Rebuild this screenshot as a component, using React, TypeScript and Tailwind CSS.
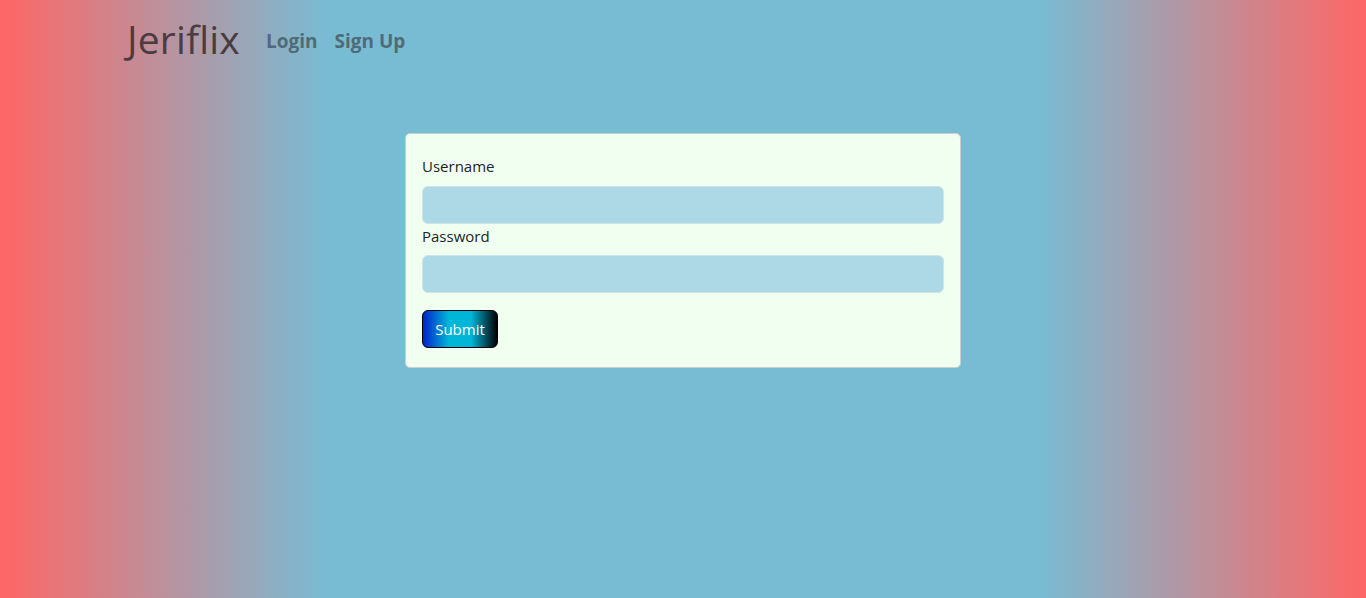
export default function App() {
  return (
    <div className="min-h-screen w-full bg-[linear-gradient(to_right,#ff6666_0%,#78bcd3_24%,#78bcd3_76%,#ff6666_100%)] font-['Open_Sans','Noto_Sans',sans-serif]">
      <nav className="h-[80px]">
        <div className="mx-auto flex w-[1140px] items-center px-3 pt-[12px]">
          <a href="#" className="ml-[2px] mr-[26px] text-[39px] font-medium leading-[54px] tracking-[0.2px] text-[#4a3c40]">
            Jeriflix
          </a>
          <div className="flex gap-[17px] pt-[4px] text-[19px] font-bold text-[#4f6b78]">
            <a href="#">Login</a>
            <a href="#">Sign Up</a>
          </div>
        </div>
      </nav>
      <div className="pt-[53px]">
        <form className="mx-auto w-[556px] rounded-[5px] border border-[#c9d0cc] bg-[#f0fff0] px-[16px] pt-[21px] pb-[19px] text-[15px] text-[#212529]">
          <label className="block leading-[22px]">Username</label>
          <div className="mt-[9px] h-[38px] w-full rounded-[6px] border border-[#cfe3ea] bg-[#add8e6]" />
          <label className="mt-[1px] block leading-[22px]">Password</label>
          <div className="mt-[8px] h-[38px] w-full rounded-[6px] border border-[#cfe3ea] bg-[#add8e6]" />
          <button
            type="button"
            className="mt-[17px] h-[38px] w-[76px] rounded-[6px] border border-black bg-[linear-gradient(to_right,#0022cc_0%,#00b6d8_35%,#00b6d8_65%,#000000_100%)] text-[15px] text-white"
          >
            Submit
          </button>
        </form>
      </div>
    </div>
  );
}
